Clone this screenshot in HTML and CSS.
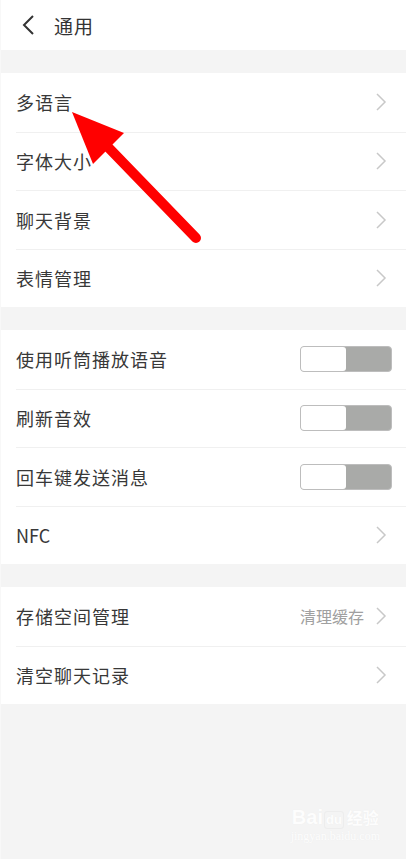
FILE: index.html
```html
<!DOCTYPE html>
<html lang="zh-CN">
<head>
  <meta charset="UTF-8">
  <meta name="viewport" content="width=device-width, initial-scale=1.0">
  <title>通用</title>
  <link rel="stylesheet" href="styles.css">
</head>
<body>
  <div class="page">
    <header class="topbar">
      <svg class="back" width="14" height="20" viewBox="0 0 14 20"><polyline points="11,1 2,10 11,19" fill="none" stroke="#333" stroke-width="2"/></svg>
      <span class="title">通用</span>
    </header>

    <section class="group">
      <div class="row"><span class="label">多语言</span><svg class="chev" viewBox="0 0 11 18"><polyline points="1,1 9,9 1,17" fill="none" stroke="#c8c8c8" stroke-width="1.5"/></svg></div>
      <div class="row"><span class="label">字体大小</span><svg class="chev" viewBox="0 0 11 18"><polyline points="1,1 9,9 1,17" fill="none" stroke="#c8c8c8" stroke-width="1.5"/></svg></div>
      <div class="row"><span class="label">聊天背景</span><svg class="chev" viewBox="0 0 11 18"><polyline points="1,1 9,9 1,17" fill="none" stroke="#c8c8c8" stroke-width="1.5"/></svg></div>
      <div class="row"><span class="label">表情管理</span><svg class="chev" viewBox="0 0 11 18"><polyline points="1,1 9,9 1,17" fill="none" stroke="#c8c8c8" stroke-width="1.5"/></svg></div>
    </section>

    <section class="group">
      <div class="row"><span class="label">使用听筒播放语音</span><span class="toggle"><i></i></span></div>
      <div class="row"><span class="label">刷新音效</span><span class="toggle"><i></i></span></div>
      <div class="row"><span class="label">回车键发送消息</span><span class="toggle"><i></i></span></div>
      <div class="row"><span class="label latin">NFC</span><svg class="chev" viewBox="0 0 11 18"><polyline points="1,1 9,9 1,17" fill="none" stroke="#c8c8c8" stroke-width="1.5"/></svg></div>
    </section>

    <section class="group">
      <div class="row"><span class="label">存储空间管理</span><span class="extra">清理缓存</span><svg class="chev" viewBox="0 0 11 18"><polyline points="1,1 9,9 1,17" fill="none" stroke="#c8c8c8" stroke-width="1.5"/></svg></div>
      <div class="row"><span class="label">清空聊天记录</span><svg class="chev" viewBox="0 0 11 18"><polyline points="1,1 9,9 1,17" fill="none" stroke="#c8c8c8" stroke-width="1.5"/></svg></div>
    </section>

    <!-- annotation arrow drawn over the list -->
    <svg class="arrow" width="406" height="300" viewBox="0 0 406 300">
      <line x1="195" y1="238" x2="104" y2="144" stroke="#ff0000" stroke-width="10" stroke-linecap="round"/>
      <polygon points="71,112 123,133 92,164" fill="#ff0000"/>
    </svg>

    <div class="watermark">
      <div class="wm-logo">Bai<span class="wm-du">du</span><span class="wm-cn">经验</span></div>
      <div class="wm-url">jingyan.baidu.com</div>
    </div>
  </div>
</body>
</html>
```

FILE: styles.css
```css
* {
  box-sizing: border-box;
}

body {
  margin: 0;
  background: #f4f4f4;
  font-family: "Noto Sans CJK SC", "Noto Sans", sans-serif;
  color: #333;
}

.page {
  position: relative;
  width: 406px;
  height: 859px;
  overflow: hidden;
  border-left: 1px solid #f8f8f8;
}

.topbar {
  display: flex;
  align-items: center;
  height: 50px;
  background: #fff;
  padding-left: 21px;
  margin-bottom: 23px;
}

.back {
  margin-right: 18px;
}

.title {
  font-size: 19px;
  letter-spacing: 1px;
  color: #333;
}

.group {
  background: #fff;
  padding-left: 15px;
  margin-bottom: 23px;
}

.row {
  display: flex;
  align-items: center;
  height: 58.5px;
  padding-right: 14px;
  border-top: 1px solid #f0f0f0;
}

.row:first-child {
  border-top: none;
}

.label {
  flex: 1;
  font-size: 18px;
  letter-spacing: 1px;
  color: #383838;
}

.label.latin {
  letter-spacing: 0;
}

.extra {
  font-size: 16px;
  color: #a0a0a0;
  margin-right: 12px;
}

.chev {
  width: 11px;
  height: 18px;
  margin-right: 5px;
}

.toggle {
  display: flex;
  width: 92px;
  height: 26px;
  background: #a9aaa8;
  border: 1px solid #bdbdbd;
  border-radius: 4px;
}

.toggle i {
  width: 45px;
  height: 100%;
  background: #fff;
  border-radius: 3px;
}

.arrow {
  position: absolute;
  left: 0;
  top: 0;
  pointer-events: none;
}

.watermark {
  position: absolute;
  right: 26px;
  bottom: 16px;
  text-align: center;
  color: #fdfdfd;
  text-shadow: 0 0 1px #ebebeb;
}

.wm-logo {
  font-family: "Liberation Sans", sans-serif;
  font-weight: bold;
  font-size: 20px;
  line-height: 24px;
}

.wm-du {
  display: inline-block;
  border: 1px solid #ededed;
  border-radius: 3px;
  font-size: 13px;
  line-height: 16px;
  padding: 0 1px;
  margin: 0 3px 0 1px;
}

.wm-cn {
  font-family: "Noto Sans CJK SC", sans-serif;
  font-size: 16px;
}

.wm-url {
  font-family: "Liberation Serif", serif;
  font-size: 12px;
  line-height: 14px;
}
```
